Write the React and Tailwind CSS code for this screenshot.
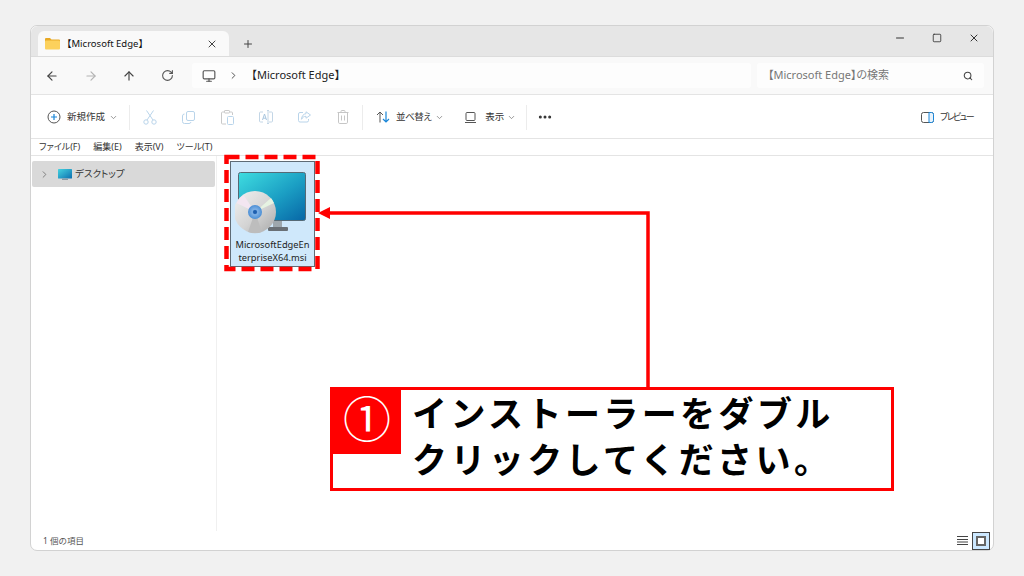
import {
  ArrowLeft,
  ArrowRight,
  ArrowUp,
  RotateCw,
  Monitor,
  ChevronRight,
  ChevronDown,
  Search,
  Plus,
  X,
  Minus,
  Square,
  MoreHorizontal,
} from "lucide-react";

const font = "font-['Noto_Sans','Noto_Sans_CJK_JP',sans-serif]";
const palt = "[font-feature-settings:'palt']";

const FolderIcon = () => (
  <svg width="15" height="13" viewBox="0 0 15 13">
    <path d="M0 2a1 1 0 0 1 1-1h4l1.5 1.5H14a1 1 0 0 1 1 1V5H0z" fill="#e8a925" />
    <rect x="0" y="3.5" width="15" height="9" rx="1" fill="#fcd15c" />
  </svg>
);

const PlusCircleIcon = () => (
  <svg width="14" height="14" viewBox="0 0 14 14" fill="none">
    <circle cx="7" cy="7" r="6" stroke="#555" strokeWidth="1" />
    <path d="M7 4v6M4 7h6" stroke="#1a86d8" strokeWidth="1.2" />
  </svg>
);

const ScissorsIcon = () => (
  <svg width="14" height="15" viewBox="0 0 14 15" fill="none" stroke="#b9d4ea">
    <circle cx="3" cy="12" r="2.2" />
    <circle cx="11" cy="12" r="2.2" />
    <path d="M4 10L10.5 .5M10 10L3.5 .5" />
  </svg>
);

const CopyIcon = () => (
  <svg width="13" height="13" viewBox="0 0 13 13" fill="none" stroke="#b9d4ea">
    <rect x="4.5" y=".5" width="8" height="9" rx="1.5" />
    <path d="M2.5 3A2 2 0 0 0 .5 5v5.5a2 2 0 0 0 2 2H7a2 2 0 0 0 2-1.5" />
  </svg>
);

const PasteIcon = () => (
  <svg width="13" height="15" viewBox="0 0 13 15" fill="none" stroke="#c9c9c9">
    <path d="M3.5 2H1.5a1 1 0 0 0-1 1v10a1 1 0 0 0 1 1H5M9 2h1.5a1 1 0 0 1 1 1v2" />
    <rect x="3.5" y=".5" width="5" height="2.5" rx=".6" />
    <rect x="6.5" y="6.5" width="6" height="8" rx="1" stroke="#b9d4ea" />
  </svg>
);

const RenameIcon = () => (
  <svg width="14" height="14" viewBox="0 0 14 14" fill="none" stroke="#c3d6e6">
    <path d="M4 2H1.5a1 1 0 0 0-1 1v8a1 1 0 0 0 1 1H4M10 2h2.5a1 1 0 0 1 1 1v8a1 1 0 0 1-1 1H10M8 .5H10M8 13.5H10M9 .5v13" />
    <path d="M3.5 10l2-6 2 6M4.2 8.2h2.8" stroke="#a8c6df" />
  </svg>
);

const ShareIcon = () => (
  <svg width="13" height="12" viewBox="0 0 13 12" fill="none" stroke="#b9d4ea">
    <path d="M5 1.5H2a1.5 1.5 0 0 0-1.5 1.5v6.5A1.5 1.5 0 0 0 2 11h7a1.5 1.5 0 0 0 1.5-1.5V8" />
    <path d="M8 .8L12.5 4 8 7.2V5.3C6 5.3 4.5 6.2 3.5 8.3 3.7 5 5.5 2.9 8 2.7z" />
  </svg>
);

const TrashIcon = () => (
  <svg width="12" height="14" viewBox="0 0 12 14" fill="none" stroke="#c6c6c6">
    <path d="M.5 2.5h11M4 2.5V1.2A.7.7 0 0 1 4.7.5h2.6a.7.7 0 0 1 .7.7v1.3M1.5 2.5v9.7a1.3 1.3 0 0 0 1.3 1.3h6.4a1.3 1.3 0 0 0 1.3-1.3V2.5M4.5 5.5v5M7.5 5.5v5" />
  </svg>
);

const SortIcon = () => (
  <svg width="14" height="12" viewBox="0 0 14 12" fill="none" strokeWidth="1">
    <path d="M4 11.5V1M1 4l3-3 3 3" stroke="#555" />
    <path d="M10 .5V11M7 8l3 3 3-3" stroke="#1a86d8" strokeWidth="1.2" />
  </svg>
);

const ViewIcon = () => (
  <svg width="11" height="11" viewBox="0 0 11 11" fill="none" stroke="#555">
    <rect x="1" y=".5" width="9" height="8" rx="1" />
    <path d="M0 10.5h11" />
  </svg>
);

const PreviewIcon = () => (
  <svg width="13" height="11" viewBox="0 0 13 11" fill="none">
    <rect x=".5" y=".5" width="12" height="10" rx="2" stroke="#555" />
    <path d="M8 .5h2.5a2 2 0 0 1 2 2v6a2 2 0 0 1-2 2H8z" stroke="#1a86d8" fill="#e8f3fc" />
  </svg>
);

const DesktopIcon = () => (
  <svg width="14" height="11" viewBox="0 0 14 11">
    <defs>
      <linearGradient id="desk" x1="0" y1="0" x2="1" y2="1">
        <stop offset="0" stopColor="#45d4e0" />
        <stop offset="1" stopColor="#0d6fb0" />
      </linearGradient>
    </defs>
    <rect width="14" height="9.5" rx=".6" fill="url(#desk)" />
    <rect x="4" y="9.5" width="6" height="1.5" fill="#8a9aa5" />
  </svg>
);

const InstallerIcon = () => (
  <svg width="76" height="64" viewBox="0 0 76 64">
    <defs>
      <linearGradient id="screen" x1="0" y1="0" x2="1" y2="1">
        <stop offset="0" stopColor="#3fdde0" />
        <stop offset="0.55" stopColor="#1b9fc4" />
        <stop offset="1" stopColor="#0766a6" />
      </linearGradient>
      <linearGradient id="disc" x1="0" y1="0" x2="1" y2="1">
        <stop offset="0" stopColor="#f2f2f2" />
        <stop offset="0.55" stopColor="#d4d4d4" />
        <stop offset="1" stopColor="#a8a8a8" />
      </linearGradient>
      <radialGradient id="hub">
        <stop offset="0" stopColor="#2f7fd0" />
        <stop offset="0.4" stopColor="#7fb0e4" />
        <stop offset="1" stopColor="#4a8fd6" />
      </radialGradient>
    </defs>
    <rect x="3.5" y=".5" width="67" height="48" rx="2" fill="url(#screen)" stroke="#566a76" strokeWidth="1" />
    <path d="M38 49h9v6h-9z" fill="#9ea7ad" />
    <rect x="33" y="55" width="20" height="4" rx="1" fill="#6a7076" />
    <circle cx="20" cy="40" r="21" fill="url(#disc)" />
    <path d="M20 40L1.5 31a21 21 0 0 1 7-8z" fill="#f3e6f1" />
    <path d="M20 40L36 26a21 21 0 0 1 3 5z" fill="#e6f3e2" />
    <path d="M20 40l-7 20a21 21 0 0 0 14 0z" fill="#bdbdbd" />
    <circle cx="20" cy="40" r="7" fill="url(#hub)" />
    <circle cx="20" cy="40" r="2" fill="#1f5fae" />
  </svg>
);

const ToolButton = ({ children }) => (
  <div className="flex w-[38.5px] justify-center">{children}</div>
);

const Divider = () => <div className="h-[25px] w-px bg-[#ececec]" />;

const App = () => {
  return (
    <div className={`${font} h-[576px] w-[1024px] overflow-hidden bg-[#f1f1f1] pl-[30px] pt-[25px]`}>
      {/* Window */}
      <div className="relative flex h-[526px] w-[964px] flex-col overflow-visible rounded-[7px] border border-[#d2d2d2] bg-white">
        {/* Title bar */}
        <div className="flex h-[31px] shrink-0 items-end rounded-t-[7px] border-b border-[#dcdcdc] bg-[#e6e6e6] pl-[7px]">
          <div className="flex h-[25px] w-[191px] items-center rounded-t-[6px] bg-[#f9f9f9] pl-[7px] pr-[11px] text-[9.5px] text-[#111]">
            <FolderIcon />
            <span className="ml-[2px] mt-[1px] flex-1">【Microsoft Edge】</span>
            <X size={12} color="#444" />
          </div>
          <Plus size={12} color="#444" className="mb-[6px] ml-[13px]" />
          <div className="ml-auto mb-[12px] flex items-center gap-[26px] pr-[13px] text-[#333]">
            <Minus size={12} />
            <Square size={10} strokeWidth={2} />
            <X size={12} />
          </div>
        </div>

        {/* Address bar */}
        <div className="flex h-[38px] shrink-0 items-center border-b border-[#e4e4e4] bg-[#f9f9f9] pl-[14px] pr-[9px]">
          <ArrowLeft size={14} color="#444" />
          <ArrowRight size={14} color="#b4b4b4" className="ml-[25px]" />
          <ArrowUp size={14} color="#444" className="ml-[24px]" />
          <RotateCw size={13} color="#555" className="ml-[25px]" />
          <div className="ml-[18px] flex h-[25px] w-[559px] items-center rounded-[3px] bg-[#fdfdfd] pl-[10px] text-[11px] text-[#222]">
            <Monitor size={14} color="#555" />
            <ChevronRight size={11} color="#444" className="ml-[12px]" />
            <span className="ml-[7px]">【Microsoft Edge】</span>
          </div>
          <div className="ml-[6px] flex h-[25px] w-[227px] items-center justify-between rounded-[3px] bg-[#fdfdfd] pl-[11px] pr-[11px] text-[11px] text-[#777]">
            <span className={palt}>【Microsoft Edge】の検索</span>
            <Search size={10} color="#444" strokeWidth={2.5} />
          </div>
        </div>

        {/* Command bar */}
        <div className={`flex h-[44px] shrink-0 items-center border-b border-[#e4e4e4] pl-[16px] pr-[20px] pt-[1px] text-[9.5px] text-[#333] ${palt}`}>
          <PlusCircleIcon />
          <span className="ml-[6px]">新規作成</span>
          <ChevronDown size={9} color="#777" className="ml-[4px]" />
          <div className="ml-[11px] mr-[1px]">
            <Divider />
          </div>
          <ToolButton>
            <ScissorsIcon />
          </ToolButton>
          <ToolButton>
            <CopyIcon />
          </ToolButton>
          <ToolButton>
            <PasteIcon />
          </ToolButton>
          <ToolButton>
            <RenameIcon />
          </ToolButton>
          <ToolButton>
            <ShareIcon />
          </ToolButton>
          <ToolButton>
            <TrashIcon />
          </ToolButton>
          <Divider />
          <div className="ml-[13px]">
            <SortIcon />
          </div>
          <span className="ml-[6px] tracking-[-0.5px]">並べ替え</span>
          <ChevronDown size={9} color="#777" className="ml-[4px]" />
          <div className="ml-[21px]">
            <ViewIcon />
          </div>
          <span className="ml-[9px]">表示</span>
          <ChevronDown size={9} color="#777" className="ml-[3px]" />
          <div className="ml-[10px] mr-[10px]">
            <Divider />
          </div>
          <MoreHorizontal size={16} color="#333" strokeWidth={2.5} />
          <div className="ml-auto flex items-center">
            <PreviewIcon />
            <span className="ml-[6px] text-[9px] tracking-[-1.6px]">プレビュー</span>
          </div>
        </div>

        {/* Menu bar */}
        <div className={`flex h-[17px] shrink-0 items-center gap-[13px] border-b border-[#e4e4e4] pl-[8px] text-[9px] text-[#333] ${palt}`}>
          <span>ファイル(F)</span>
          <span>編集(E)</span>
          <span>表示(V)</span>
          <span>ツール(T)</span>
        </div>

        {/* Body */}
        <div className="flex min-h-0 flex-1">
          <div className="w-[186px] shrink-0 border-r border-[#f0f0f0] px-px pt-[5px]">
            <div className={`flex h-[26px] items-center rounded-[2px] bg-[#d9d9d9] pl-[7px] text-[9.5px] text-[#333] ${palt}`}>
              <ChevronRight size={11} color="#777" />
              <div className="ml-[8px]">
                <DesktopIcon />
              </div>
              <span className="ml-[3px]">デスクトップ</span>
            </div>
          </div>
          <div className="pl-[13px] pt-[5px]">
            <div className="flex h-[106px] w-[85px] flex-col items-center border border-[#5f6b75] bg-[#cfe8fb] pt-[10px] shadow-[0_0_0_1px_#fff]">
              <InstallerIcon />
              <div className="mt-[2px] w-[84px] text-center text-[9.3px] leading-[13px] text-[#222]">
                MicrosoftEdgeEn
                <br />
                terpriseX64.msi
              </div>
            </div>
          </div>
        </div>

        {/* Status bar */}
        <div className="flex h-[19px] shrink-0 items-center justify-between pl-[12px] pr-[3px] pt-[1px] text-[8.5px] text-[#555]">
          <span>1 個の項目</span>
          <div className="-mt-[1px] flex items-center gap-[4px]">
            <svg width="11" height="9" viewBox="0 0 11 9" stroke="#444">
              <path d="M0 .5h11M0 3.5h11M0 6h11M0 8.5h11" />
            </svg>
            <div className="flex h-[18px] w-[18px] items-center justify-center border border-[#444] bg-[#cce8ff]">
              <div className="h-[10px] w-[10px] border-[2px] border-[#666] bg-white" />
            </div>
          </div>
        </div>

        {/* Red dashed highlight and arrow */}
        <svg className="pointer-events-none absolute left-[-31px] top-[-26px]" width="1024" height="576" fill="none">
          <rect x="226.5" y="157" width="91" height="112" stroke="#ff0000" strokeWidth="4.5" strokeDasharray="13 6" />
          <path d="M328 213H648V388" stroke="#ff0000" strokeWidth="3.5" />
          <path d="M318 213l12-6v12z" fill="#ff0000" />
        </svg>

        {/* Callout */}
        <div className="absolute left-[299px] top-[361px] flex h-[104px] w-[564px] border-[3px] border-[#ff0000] bg-white font-['Noto_Sans_CJK_JP',sans-serif]">
          <div className="flex h-[64px] w-[68px] shrink-0 items-start justify-center bg-[#ff0000]">
            <span className="text-[48px] leading-[52px] text-white">①</span>
          </div>
          <div className="-mt-[1px] pl-[11px] text-[35px] font-bold leading-[46px] tracking-[3.4px] text-black">
            インストーラーをダブル
            <br />
            クリックしてください。
          </div>
        </div>
      </div>
    </div>
  );
};

export default App;
